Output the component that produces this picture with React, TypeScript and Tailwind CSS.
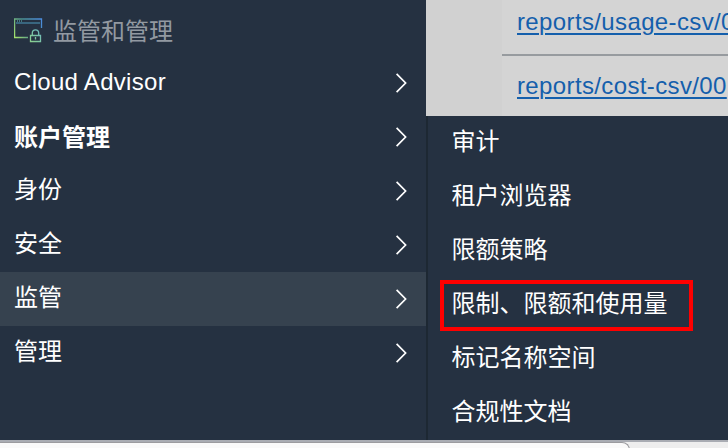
import type { ReactNode } from 'react';

const sections = [
  { label: 'Cloud Advisor', text: 'pt-[10px] tracking-[0.3px]' },
  { label: '账户管理', text: 'pt-[12px] font-bold' },
  { label: '身份', text: 'pt-[10px]' },
  { label: '安全', text: 'pt-[10px]' },
  { label: '监管', text: 'pt-[10px]', active: true },
  { label: '管理', text: 'pt-[10px]' },
];

const services = ['审计', '租户浏览器', '限额策略', '限制、限额和使用量', '标记名称空间', '合规性文档'];

function GovernanceIcon() {
  return (
    <svg width="30" height="26" viewBox="0 0 30 26" fill="none" className="shrink-0">
      <defs>
        <linearGradient id="edge" x1="1" y1="20" x2="28" y2="4" gradientUnits="userSpaceOnUse">
          <stop stopColor="#a5e36b" />
          <stop offset="0.5" stopColor="#4b9090" />
          <stop offset="1" stopColor="#4b8ddd" />
        </linearGradient>
        <linearGradient id="lock" x1="16" y1="24" x2="28" y2="12" gradientUnits="userSpaceOnUse">
          <stop stopColor="#8bd18b" />
          <stop offset="1" stopColor="#69b5c5" />
        </linearGradient>
      </defs>
      <path d="M14 19.5H.6V1H27.5V10" stroke="url(#edge)" strokeWidth="1.3" />
      <path d="M2 5H26" stroke="#3d6c87" strokeWidth="1.8" />
      <path d="M3.5 2v2M5.5 2v2M7.5 2v2" stroke="#4d8b90" strokeWidth=".8" />
      <path d="M16.5 17.5H26.5V23.5H16.5ZM18.3 17.5V15a3.2 3.2 0 0 1 6.4 0v2.5M21.5 19v2.5" stroke="url(#lock)" strokeWidth="1.3" />
    </svg>
  );
}

function Chevron() {
  return (
    <svg width="12" height="20" viewBox="0 0 12 20" fill="none" className="mt-[17px] shrink-0">
      <path d="M.6 .8 9.6 10 .6 19.2" stroke="white" strokeWidth="1.7" />
    </svg>
  );
}

function ReportLink({ children }: { children: ReactNode }) {
  return (
    <a className="block text-[24px] leading-[32px] tracking-[0.37px] whitespace-nowrap text-[#145fac] underline decoration-2 underline-offset-[3px]">
      {children}
    </a>
  );
}

export default function App() {
  return (
    <div className="flex h-[448px] w-[728px] flex-col overflow-hidden bg-[#253141] font-['Liberation_Sans','Noto_Sans_CJK_SC',sans-serif] text-[24px] leading-[32px] text-white">
      <div className="flex h-[440px] shrink-0">
        <nav className="w-[426px] shrink-0">
          <header className="flex h-[56px] items-start pl-[14px] text-[#9299a1]">
            <div className="pt-[18px]"><GovernanceIcon /></div>
            <span className="pt-[16px] pl-[9px]">监管和管理</span>
          </header>
          {sections.map((s) => (
            <div key={s.label} className={`flex h-[54px] items-start justify-between pr-[18px] pl-[14px] ${s.active ? 'bg-[#36424f]' : ''}`}>
              <span className={s.text}>{s.label}</span>
              <Chevron />
            </div>
          ))}
        </nav>
        <div className="flex min-w-0 flex-1 flex-col">
          <div className="flex h-[116px] shrink-0 overflow-hidden bg-[#d1d1d1]">
            <div className="w-[76px] shrink-0" />
            <div className="flex-1 bg-[#d4d4d4]">
              <div className="h-[56px] border-b-2 border-[#979b9f] pt-[6px] pl-[15px]">
                <ReportLink>reports/usage-csv/0</ReportLink>
              </div>
              <div className="pt-[14px] pl-[15px]">
                <ReportLink>reports/cost-csv/00</ReportLink>
              </div>
            </div>
          </div>
          <div className="flex-1 border-l-2 border-[#1d2833]">
            {services.map((name, i) => (
              <div key={name} className="relative h-[54px] pt-[10px] pl-[23.5px] whitespace-nowrap">
                {name}
                {i === 3 && <span className="absolute top-[2px] left-[12px] h-[51px] w-[253px] border-4 border-[#ff0000]" />}
              </div>
            ))}
          </div>
        </div>
      </div>
      <div className="flex h-[8px] shrink-0 overflow-hidden border-t-2 border-[#a9acb3] bg-[#eeeeee]">
        <div className="h-[16px] w-[630px] rounded-tr-[8px] border-t border-r border-[#9b9b9f] bg-[#fafafa]" />
      </div>
    </div>
  );
}
